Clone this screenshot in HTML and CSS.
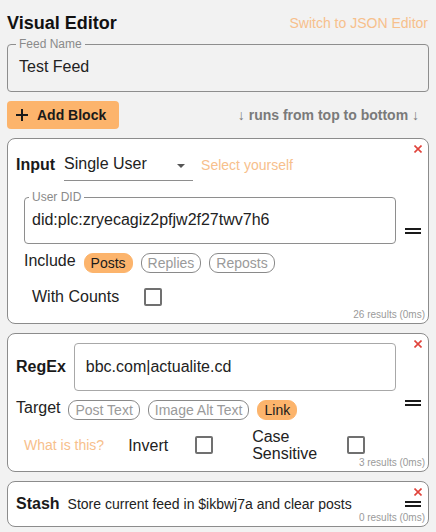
FILE: index.html
```html
<!DOCTYPE html>
<html lang="en">
<head>
<meta charset="utf-8">
<title>Visual Editor</title>
<link rel="stylesheet" href="styles.css">
</head>
<body>
<div class="editor">
  <header class="head">
    <h1 class="title">Visual Editor</h1>
    <a class="soft-link head-link">Switch to JSON Editor</a>
  </header>

  <fieldset class="field field-feed">
    <legend class="field-label">Feed Name</legend>
    <div class="field-value">Test Feed</div>
  </fieldset>

  <div class="toolbar">
    <button class="add-btn" type="button">
      <svg class="plus" width="12" height="12" viewBox="0 0 12 12"><path d="M6 0V12M0 6H12" stroke="#1a1a1a" stroke-width="2"/></svg>
      <span>Add Block</span>
    </button>
    <span class="order-hint">↓ runs from top to bottom ↓</span>
  </div>

  <section class="block">
    <div class="block-body">
      <div class="block-head">
        <span class="block-name">Input</span>
        <div class="select">
          <span>Single User</span>
          <svg class="caret" width="8" height="4" viewBox="0 0 8 4"><polygon points="0,0 8,0 4,4" fill="#555"/></svg>
        </div>
        <a class="soft-link select-self">Select yourself</a>
      </div>
      <div class="block-sub">
        <fieldset class="field field-did">
          <legend class="field-label">User DID</legend>
          <div class="field-value">did:plc:zryecagiz2pfjw2f27twv7h6</div>
        </fieldset>
        <div class="chip-row include-row">
          <span class="row-label">Include</span>
          <div class="chips">
            <span class="chip chip-on">Posts</span>
            <span class="chip">Replies</span>
            <span class="chip">Reposts</span>
          </div>
        </div>
        <div class="check-row counts-row">
          <span class="check-label">With Counts</span>
          <span class="checkbox counts-box"></span>
        </div>
      </div>
    </div>
    <div class="handle"><span></span><span></span></div>
    <button class="close" type="button"><svg width="8" height="8" viewBox="0 0 8 8"><path d="M0.5 0.5L7.5 7.5M7.5 0.5L0.5 7.5" stroke="#e0433b" stroke-width="1.6"/></svg></button>
    <span class="results">26 results (0ms)</span>
  </section>

  <section class="block">
    <div class="block-body">
      <div class="block-head">
        <span class="block-name regex-name">RegEx</span>
        <div class="text-box">bbc.com|actualite.cd</div>
      </div>
      <div class="chip-row target-row">
        <span class="row-label">Target</span>
        <div class="chips">
          <span class="chip">Post Text</span>
          <span class="chip">Image Alt Text</span>
          <span class="chip chip-on">Link</span>
        </div>
      </div>
      <div class="options-row">
        <a class="soft-link">What is this?</a>
        <span class="opt-label invert-label">Invert</span>
        <span class="checkbox invert-box"></span>
        <span class="opt-label case-label">Case Sensitive</span>
        <span class="checkbox case-box"></span>
      </div>
    </div>
    <div class="handle"><span></span><span></span></div>
    <button class="close" type="button"><svg width="8" height="8" viewBox="0 0 8 8"><path d="M0.5 0.5L7.5 7.5M7.5 0.5L0.5 7.5" stroke="#e0433b" stroke-width="1.6"/></svg></button>
    <span class="results">3 results (0ms)</span>
  </section>

  <section class="block">
    <div class="block-body">
      <div class="stash-row">
        <span class="block-name">Stash</span>
        <span class="stash-text">Store current feed in $ikbwj7a and clear posts</span>
      </div>
    </div>
    <div class="handle"><span></span><span></span></div>
    <button class="close" type="button"><svg width="8" height="8" viewBox="0 0 8 8"><path d="M0.5 0.5L7.5 7.5M7.5 0.5L0.5 7.5" stroke="#e0433b" stroke-width="1.6"/></svg></button>
    <span class="results">0 results (0ms)</span>
  </section>
</div>
</body>
</html>
```

FILE: styles.css
```css
* { box-sizing: border-box; }

html, body {
  margin: 0;
  background: #f2f2f2;
}

body {
  padding: 12px 7px 0;
  font-family: "Liberation Sans", Arial, sans-serif;
  font-size: 16px;
  color: #222;
}

.editor {
  display: flex;
  flex-direction: column;
}

.head {
  display: flex;
  justify-content: space-between;
  align-items: center;
  height: 22px;
}

.title {
  margin: 0;
  font-size: 18px;
  line-height: 22px;
  font-weight: bold;
  color: #111;
}

.soft-link {
  color: #f7c08c;
  font-size: 14px;
  line-height: 18px;
  text-decoration: none;
}

.head-link { margin-right: 1px; }

/* outlined fields */
.field {
  margin: 0;
  min-width: 0;
  border: 1px solid #8e8e8e;
  border-radius: 4px;
}

.field-label {
  font-size: 12px;
  line-height: 14px;
  color: #8a8a8a;
  padding: 0 3px;
  margin-left: -3px;
}

.field-value {
  line-height: 20px;
  color: #222;
  white-space: nowrap;
}

.field-feed {
  margin-top: 3px;
  padding: 6px 12px 14px 11px;
}

.field-did {
  padding: 6px 8px 13px 7px;
}

/* toolbar */
.toolbar {
  margin-top: 9px;
  display: flex;
  justify-content: space-between;
  align-items: center;
  height: 28px;
}

.add-btn {
  display: flex;
  align-items: center;
  gap: 9px;
  height: 28px;
  padding: 0 13px 0 9px;
  border: none;
  border-radius: 4px;
  background: #fcb46c;
  font-family: "Liberation Sans", Arial, sans-serif;
  font-size: 14px;
  font-weight: bold;
  color: #1a1a1a;
}

.plus { display: block; }

.order-hint {
  font-size: 14px;
  font-weight: bold;
  color: #7a7a7a;
  margin-right: 10px;
}

/* blocks */
.block {
  position: relative;
  margin-top: 9px;
  display: grid;
  grid-template-columns: 1fr 16px;
  column-gap: 9px;
  align-items: center;
  padding: 9px 7px 9px 8px;
  background: #fff;
  border: 1px solid #8c8c8c;
  border-radius: 8px;
}

.block-body {
  min-width: 0;
  display: flex;
  flex-direction: column;
}

.block-head {
  display: flex;
  align-items: center;
}

.block-name {
  font-weight: bold;
  color: #1a1a1a;
  line-height: 20px;
  margin-right: 9px;
}

.regex-name { margin-right: 8px; }

.select {
  width: 129px;
  height: 33px;
  display: flex;
  align-items: center;
  justify-content: space-between;
  padding-right: 8px;
  border-bottom: 1px solid #8e8e8e;
  line-height: 20px;
}

.caret {
  display: block;
  margin-top: 4px;
}

.select-self { margin-left: 8px; }

.block-sub {
  margin-top: 9px;
  padding-left: 8px;
  display: flex;
  flex-direction: column;
}

.chip-row {
  display: flex;
  align-items: flex-start;
}

.include-row { margin-top: 7px; }
.target-row { margin-top: 7px; }

.row-label {
  line-height: 20px;
  margin-right: 8px;
}

.chips {
  display: flex;
  gap: 8px;
  margin-top: 2px;
}

.chip {
  height: 20px;
  padding: 0 6px;
  border: 1px solid #8a8a8a;
  border-radius: 9px;
  font-size: 14px;
  line-height: 18px;
  color: #9a9a9a;
  white-space: nowrap;
}

.chip-on {
  background: #fcb46c;
  border-color: #fcb46c;
  color: #1a1a1a;
}

.check-row {
  display: flex;
  align-items: center;
  height: 20px;
  line-height: 20px;
}

.counts-row {
  margin-top: 14px;
  margin-bottom: 7px;
  padding-left: 8px;
}

.checkbox {
  display: block;
  width: 18px;
  height: 18px;
  border: 2px solid #707070;
  border-radius: 2px;
  background: #fff;
  flex: none;
}

.counts-box { margin-left: 25px; }

/* regex */
.text-box {
  flex: 1;
  height: 48px;
  display: flex;
  align-items: center;
  padding: 0 11px;
  border: 1px solid #a8a8a8;
  border-radius: 4px;
  line-height: 20px;
}

.options-row {
  margin-top: 8px;
  padding-left: 8px;
  display: flex;
  align-items: center;
}

.opt-label { line-height: 17px; }

.invert-label { margin-left: 24px; }
.invert-box { margin-left: 27px; }

.case-label {
  width: 66px;
  margin-left: 39px;
}

.case-box { margin-left: 29px; }

/* stash */
.stash-row {
  display: flex;
  align-items: center;
  min-height: 26px;
}

.stash-row .block-name { margin-right: 8px; }

.stash-text {
  font-size: 14px;
  color: #222;
}

/* handle */
.handle {
  display: flex;
  flex-direction: column;
  gap: 2px;
}

.handle span {
  display: block;
  height: 2px;
  background: #1a1a1a;
}

/* overlays */
.close {
  position: absolute;
  top: 6px;
  right: 6px;
  padding: 0;
  border: none;
  background: none;
  line-height: 0;
}

.close svg { display: block; }

.results {
  position: absolute;
  right: 3px;
  bottom: 2px;
  font-size: 10px;
  line-height: 12px;
  color: #9a9a9a;
}
```
